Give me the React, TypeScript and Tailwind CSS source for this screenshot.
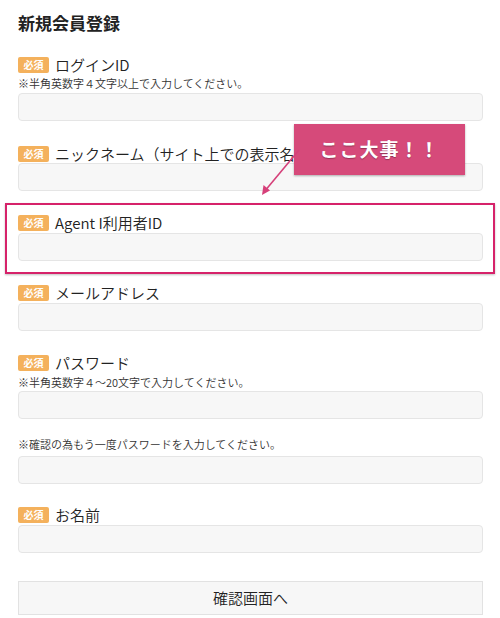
import React from 'react';

const jp = { fontFamily: '"Hiragino Kaku Gothic ProN", "Noto Sans CJK JP", "Noto Sans", sans-serif' };

function Badge() {
  return (
    <span className="flex items-center justify-center w-[31px] h-[16px] rounded-[2px] bg-[#f4b15c] text-white text-[10px] font-bold leading-none shrink-0">
      必須
    </span>
  );
}

function Label({ text }: { text: string }) {
  return (
    <div className="flex items-center gap-[6px] h-[18px]">
      <Badge />
      <span className="relative -top-[1px] text-[15px] font-[350] text-[#222] leading-none whitespace-nowrap">{text}</span>
    </div>
  );
}

function Field() {
  return <div className="h-[28px] w-full rounded-[4px] border border-[#e5e5e5] bg-[#f7f7f7]" />;
}

function Note({ text }: { text: string }) {
  return <p className="text-[11px] font-[350] leading-[14px] text-[#333] whitespace-nowrap">{text}</p>;
}

export default function App() {
  return (
    <div className="relative w-[500px] h-[618px] bg-white overflow-hidden" style={jp}>
      <div className="pl-[18px] pr-[17px] pt-[12px]">
        <h1 className="text-[17px] font-bold leading-[22px] text-[#222]">新規会員登録</h1>

        {/* ログインID */}
        <div className="mt-[22px]">
          <Label text="ログインID" />
          <div className="mt-[2px]"><Note text="※半角英数字４文字以上で入力してください。" /></div>
          <div className="mt-[3px]"><Field /></div>
        </div>

        {/* ニックネーム */}
        <div className="mt-[24px]">
          <Label text="ニックネーム（サイト上での表示名）" />
          <Field />
        </div>

        {/* Agent I */}
        <div className="mt-[12px] -ml-[13px] -mr-[12px] border-2 border-[#d6226a] shadow-[0_1px_2px_rgba(0,0,0,0.25)] pl-[11px] pr-[10px] pt-[9px] pb-[11px]">
          <Label text="Agent I利用者ID" />
          <div className="mt-[1px]"><Field /></div>
        </div>

        {/* メール */}
        <div className="mt-[10px]">
          <Label text="メールアドレス" />
          <div className="mt-[1px]"><Field /></div>
        </div>

        {/* パスワード */}
        <div className="mt-[23px]">
          <Label text="パスワード" />
          <div className="mt-[3px]"><Note text="※半角英数字４～20文字で入力してください。" /></div>
          <div className="mt-[2px]"><Field /></div>
        </div>

        {/* 確認 */}
        <div className="mt-[18px]">
          <Note text="※確認の為もう一度パスワードを入力してください。" />
          <div className="mt-[5px]"><Field /></div>
        </div>

        {/* お名前 */}
        <div className="mt-[22px]">
          <Label text="お名前" />
          <div className="mt-[1px]"><Field /></div>
        </div>

        <button className="mt-[28px] w-full h-[34px] border border-[#e2e2e2] bg-[#f7f7f7] text-[15px] font-[350] text-[#222]">
          確認画面へ
        </button>
      </div>

      {/* callout */}
      <div className="absolute left-[294px] top-[124px] w-[171px] h-[51px] bg-[#d64a7a] shadow-[0_1px_2px_rgba(0,0,0,0.3)] flex items-center justify-center">
        <span className="text-white text-[19px] font-bold tracking-[1px] [text-shadow:0_1px_1px_rgba(0,0,0,0.3)]">ここ大事！！</span>
      </div>
      <svg className="absolute left-0 top-0 pointer-events-none" width="500" height="618">
        <line x1="299" y1="150" x2="264" y2="192" stroke="#d6407a" strokeWidth="1.6" />
        <path d="M262 195 L263.5 185 L270 190.5 Z" fill="#d6407a" />
      </svg>
    </div>
  );
}
